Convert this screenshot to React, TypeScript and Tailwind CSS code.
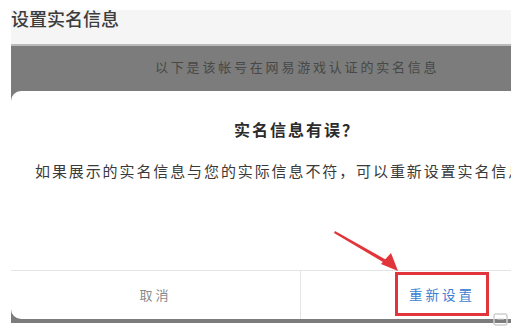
import React from "react";

const font = { fontFamily: '"Noto Sans CJK SC", "Noto Sans", sans-serif' };

export default function App() {
  return (
    <div
      className="relative w-[517px] h-[328px] overflow-hidden bg-white"
      style={font}
    >
      <div className="ml-[11px] w-[500px] flex flex-col">
        {/* top white margin */}
        <div className="h-[10px] bg-white" />
        {/* header */}
        <div className="h-[34px] bg-[#f4f5f4] flex items-start">
          <span className="mt-[-2px] text-[18px] leading-[20px] font-medium text-[#3c3c3c]">
            设置实名信息
          </span>
        </div>
        {/* gray overlay area */}
        <div className="bg-[#7b7c7b] border-t-2 border-[#b9bab9] flex flex-col overflow-hidden">
          <div className="h-[45px] flex items-center pl-[144px] pb-[4px]">
            <span className="text-[13px] tracking-[2.8px] text-[#474847]">
              以下是该帐号在网易游戏认证的实名信息
            </span>
          </div>
          {/* dialog */}
          <div className="w-[572px] shrink-0 bg-white rounded-l-[10px] flex flex-col">
            <div className="h-[25px]" />
            <div className="text-center text-[16px] leading-[26px] font-bold tracking-[2px] text-[#2b2b2b]">
              实名信息有误？
            </div>
            <div className="h-[17px]" />
            <div className="pl-[24px] whitespace-nowrap text-[15px] leading-[24px] tracking-[1.9px] text-[#3a3a3a]">
              如果展示的实名信息与您的实际信息不符，可以重新设置实名信息
            </div>
            <div className="h-[87px]" />
            <div className="h-[49px] border-t border-[#e4e4e4] flex">
              <div className="w-[289px] flex items-center justify-center text-[13px] tracking-[3px] text-[#8a8a8a]">
                取消
              </div>
              <div className="flex-1 border-l border-[#e4e4e4] flex items-start justify-center pt-px">
                <span className="h-[44px] px-[11px] border-[3px] border-[#e2353b] flex items-center text-[13.5px] tracking-[3px] text-[#3b7dd2]">
                  重新设置
                </span>
              </div>
            </div>
          </div>
          <div className="h-[4px]" />
        </div>
      </div>

      {/* red arrow annotation */}
      <svg
        className="absolute left-0 top-0"
        width="517"
        height="328"
        viewBox="0 0 517 328"
      >
        <polygon points="335,231 390,262 388,265 334,233" fill="#e2353b" />
        <polygon points="398,271 381,264 391,253" fill="#e2353b" />
      </svg>

      {/* small corner icon */}
      <svg
        className="absolute left-[492px] top-[312px]"
        width="18"
        height="16"
        viewBox="0 0 18 16"
      >
        <rect x="2" y="2" width="13" height="11" rx="2" fill="none" stroke="#cfcfcf" strokeWidth="1.5" />
        <line x1="5" y1="7" x2="12" y2="7" stroke="#d6d6d6" strokeWidth="1" />
      </svg>
    </div>
  );
}
